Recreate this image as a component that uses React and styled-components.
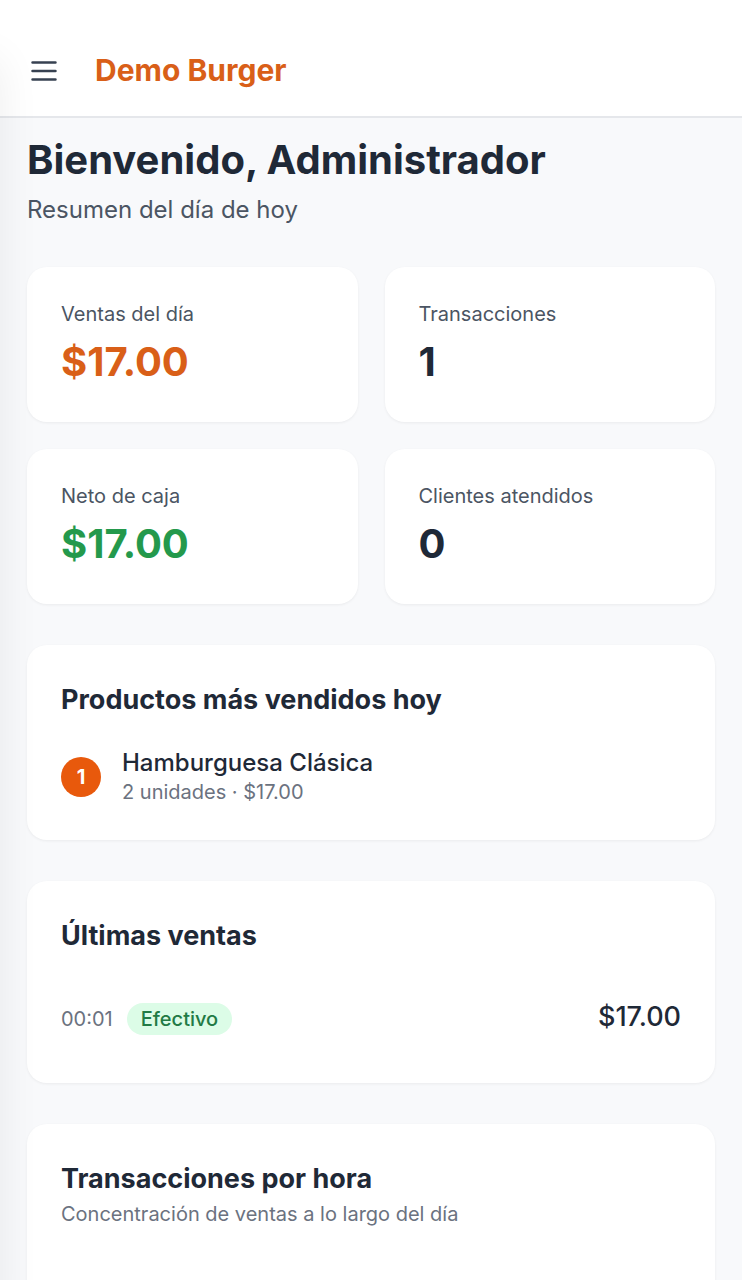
import React from "react";
import styled, { createGlobalStyle } from "styled-components";

const GlobalStyle = createGlobalStyle`
  * {
    box-sizing: border-box;
  }

  body {
    margin: 0;
    background: #f8f9fb;
    color: #1f2937;
    font-family: Inter, "Liberation Sans", sans-serif;
  }

  h1, h2, p, ol, ul {
    margin: 0;
    padding: 0;
  }
`;

const Page = styled.div`
  display: flex;
  flex-direction: column;
  height: 100vh;
`;

// closed drawer, only its shadow reaches the page
const Drawer = styled.aside`
  position: fixed;
  top: 60px;
  bottom: -40px;
  left: -280px;
  width: 280px;
  box-shadow: 0 0 40px rgba(0, 0, 0, 0.07);
  pointer-events: none;
`;

const Header = styled.header`
  display: flex;
  flex-shrink: 0;
  align-items: center;
  gap: 23px;
  padding: 40px 16px 16px;
  background: #ffffff;
  border-bottom: 2px solid #e5e7eb;
`;

const MenuButton = styled.button`
  display: flex;
  padding: 12px;
  border: 0;
  background: none;
  color: #374151;
`;

const Brand = styled.a`
  color: #d95f18;
  font-size: 30px;
  font-weight: 700;
  line-height: 60px;
  text-decoration: none;
`;

const Content = styled.main`
  flex: 1;
  min-height: 0;
  padding: 20px 27px;
  overflow-y: auto;
  scrollbar-width: none;
`;

const Stack = styled.div`
  display: grid;
  gap: 41px;
`;

const Title = styled.h1`
  font-size: 40px;
  font-weight: 700;
  line-height: 44px;
`;

const Subtitle = styled.p`
  margin-top: 12px;
  color: #4b5563;
  font-size: 24px;
  line-height: 32px;
`;

const Stats = styled.section`
  display: grid;
  grid-template-columns: 1fr 1fr;
  gap: 27px;
`;

const Card = styled.section`
  padding: 34px;
  background: #ffffff;
  border-radius: 20px;
  box-shadow: 0 1px 3px rgba(0, 0, 0, 0.06);
`;

const StatLabel = styled.p`
  color: #4b5563;
  font-size: 20px;
  line-height: 27px;
`;

const StatValue = styled.p`
  margin-top: 8px;
  color: ${({ $color }) => $color || "#1f2937"};
  font-size: 40px;
  font-weight: 700;
  line-height: 52px;
`;

const CardTitle = styled.h2`
  font-size: 27px;
  font-weight: 700;
  line-height: 41px;
`;

const Products = styled.ol`
  margin-top: 27px;
  list-style: none;
`;

const Product = styled.li`
  display: flex;
  align-items: center;
  gap: 21px;
`;

const Rank = styled.span`
  width: 40px;
  height: 40px;
  border-radius: 50%;
  background: #e8590c;
  color: #ffffff;
  font-size: 20px;
  font-weight: 700;
  line-height: 40px;
  text-align: center;
`;

const ProductName = styled.p`
  font-size: 24px;
  font-weight: 500;
  line-height: 32px;
`;

const Muted = styled.p`
  color: #6b7280;
  font-size: 20px;
  line-height: 27px;
`;

const ChartCaption = styled(Muted)`
  margin-top: 2px;
`;

const Sales = styled.ul`
  margin-top: 27px;
  list-style: none;
`;

const Sale = styled.li`
  display: flex;
  align-items: baseline;
  gap: 14px;
  padding: 14px 0 12px;
`;

const Badge = styled.span`
  padding: 0 14px;
  border-radius: 16px;
  background: #dcfce7;
  color: #227a45;
  font-size: 20px;
  font-weight: 500;
  line-height: 32px;
`;

const Amount = styled.span`
  margin-left: auto;
  font-size: 27px;
  font-weight: 500;
  line-height: 40px;
`;

const Chart = styled.div`
  height: 240px;
`;

const stats = [
  { label: "Ventas del día", value: "$17.00", color: "#d95f18" },
  { label: "Transacciones", value: "1" },
  { label: "Neto de caja", value: "$17.00", color: "#24994c" },
  { label: "Clientes atendidos", value: "0" },
];

const products = [{ name: "Hamburguesa Clásica", detail: "2 unidades · $17.00" }];

const sales = [{ time: "00:01", method: "Efectivo", amount: "$17.00" }];

function MenuIcon() {
  return (
    <svg width="32" height="32" viewBox="0 0 32 32" fill="none" stroke="currentColor" strokeWidth="2.7" strokeLinecap="round">
      <path d="M4.6 8.5h22.8M4.6 17h22.8M4.6 25.5h22.8" />
    </svg>
  );
}

function App() {
  return (
    <Page>
      <GlobalStyle />
      <Header>
        <MenuButton type="button" aria-label="Menú">
          <MenuIcon />
        </MenuButton>
        <Brand href="#">Demo Burger</Brand>
      </Header>
      <Content>
        <Stack>
          <div>
            <Title>Bienvenido, Administrador</Title>
            <Subtitle>Resumen del día de hoy</Subtitle>
          </div>
          <Stats>
            {stats.map((stat) => (
              <Card key={stat.label}>
                <StatLabel>{stat.label}</StatLabel>
                <StatValue $color={stat.color}>{stat.value}</StatValue>
              </Card>
            ))}
          </Stats>
          <Card>
            <CardTitle>Productos más vendidos hoy</CardTitle>
            <Products>
              {products.map((product, index) => (
                <Product key={product.name}>
                  <Rank>{index + 1}</Rank>
                  <div>
                    <ProductName>{product.name}</ProductName>
                    <Muted>{product.detail}</Muted>
                  </div>
                </Product>
              ))}
            </Products>
          </Card>
          <Card>
            <CardTitle>Últimas ventas</CardTitle>
            <Sales>
              {sales.map((sale) => (
                <Sale key={sale.time}>
                  <Muted as="time">{sale.time}</Muted>
                  <Badge>{sale.method}</Badge>
                  <Amount>{sale.amount}</Amount>
                </Sale>
              ))}
            </Sales>
          </Card>
          <Card>
            <CardTitle>Transacciones por hora</CardTitle>
            <ChartCaption>Concentración de ventas a lo largo del día</ChartCaption>
            <Chart />
          </Card>
        </Stack>
      </Content>
      <Drawer />
    </Page>
  );
}

export default App;
